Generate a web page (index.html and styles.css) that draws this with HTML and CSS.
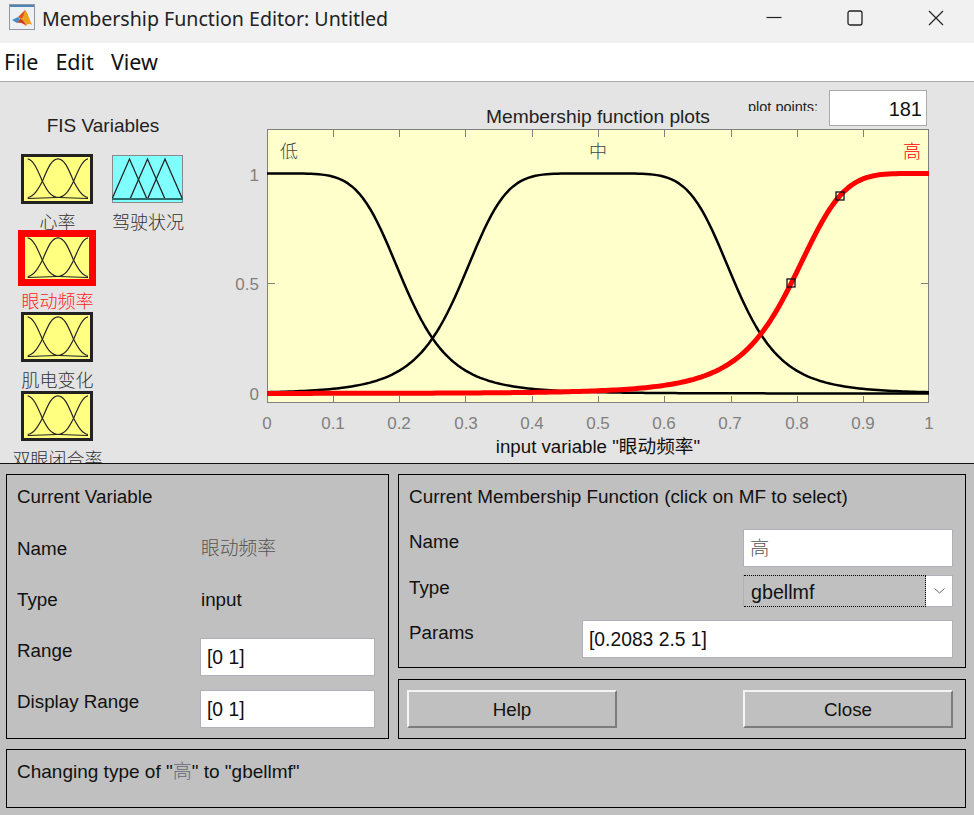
FILE: index.html
```html
<!DOCTYPE html>
<html lang="en">
<head>
<meta charset="utf-8">
<title>Membership Function Editor: Untitled</title>
<link rel="stylesheet" href="styles.css">
</head>
<body>
<svg class="defs" width="0" height="0" aria-hidden="true">
  <symbol id="bells" viewBox="3 3 66 43">
    <g fill="none" stroke="#222" stroke-width="1.2">
      <path d="M6.7 4.3C12 5 16 14 21.4 26.7C26 36 30 43 38 43L67 44"/>
      <path d="M6.7 43C13 42 17 35 21.4 26.7C26 16 30 4.300 37 4.300C44 4.300 48 16 52.600 26.700C57 35 61 42 67 43"/>
      <path d="M67 4.300C62 5 58 14 52.600 26.700C48 36 44 43 36 43L6.700 44"/>
    </g>
  </symbol>
</svg>

<header class="titlebar">
  <svg class="app-icon" width="26" height="26" viewBox="0 0 26 26">
    <rect x="0.5" y="0.5" width="25" height="25" fill="#eef1f4" stroke="#8d98a3"/>
    <rect x="1" y="1" width="24" height="2" fill="#4f86b8"/>
    <path d="M3 16L9 13L11 15L8 19Z" fill="#3f8fc9"/>
    <path d="M9 13L16 6L19 11L12 15Z" fill="#d9541e"/>
    <path d="M16 6C18 8 21 16 23 21C21 20 19 19 17 22C16 18 14 16 12 15C15 13 15 9 16 6Z" fill="#f0a020"/>
    <path d="M8 19L11 15L12 15C14 16 16 18 17 22C15 20 12 18 8 19Z" fill="#c8401a"/>
  </svg>
  <h1 class="app-title">Membership Function Editor: Untitled</h1>
  <div class="win-controls">
    <span class="win-btn"><svg width="16" height="16" viewBox="0 0 16 16"><path d="M0.5 7.500H15.500" stroke="#222" stroke-width="1.2"/></svg></span>
    <span class="win-btn"><svg width="16" height="16" viewBox="0 0 16 16"><rect x="1" y="1" width="14" height="14" rx="2" fill="none" stroke="#222" stroke-width="1.3"/></svg></span>
    <span class="win-btn"><svg width="16" height="16" viewBox="0 0 16 16"><path d="M1 1L15 15M15 1L1 15" stroke="#222" stroke-width="1.2"/></svg></span>
  </div>
</header>

<nav class="menubar">
  <span class="menu-item">File</span>
  <span class="menu-item">Edit</span>
  <span class="menu-item">View</span>
</nav>

<section class="top">
  <aside class="fis">
    <div class="fis-title">FIS Variables</div>
    <div class="fis-grid">
      <div class="var">
        <div class="icon"><svg class="bells"><use href="#bells"/></svg></div>
        <div class="var-label">心率</div>
      </div>
      <div class="var">
        <div class="icon-out">
          <svg width="71" height="48" viewBox="0 0 71 48">
            <g fill="none" stroke="#222" stroke-width="1.3">
              <path d="M0 44L17.5 4L35 44"/>
              <path d="M18 44L35.5 4L53 44"/>
              <path d="M35.500 44L53 4L70.500 44"/>
            </g>
            <path d="M0 44H71" stroke="#2a6a6a" stroke-width="2.200"/>
          </svg>
        </div>
        <div class="var-label">驾驶状况</div>
      </div>
      <div class="var">
        <div class="icon selected"><svg class="bells"><use href="#bells"/></svg></div>
        <div class="var-label red">眼动频率</div>
      </div>
      <div class="var-gap"></div>
      <div class="var">
        <div class="icon"><svg class="bells"><use href="#bells"/></svg></div>
        <div class="var-label">肌电变化</div>
      </div>
      <div class="var-gap"></div>
      <div class="var">
        <div class="icon"><svg class="bells"><use href="#bells"/></svg></div>
        <div class="var-label">双眼闭合率</div>
      </div>
    </div>
  </aside>

  <div class="plot">
    <div class="plot-head">
      <div class="plot-title">Membership function plots</div>
      <div class="points-label"><span>plot points:</span></div>
      <div class="points-input">181</div>
    </div>
    <svg class="chart" width="720" height="334" viewBox="220 129 720 334">
      <rect x="267.500" y="129.500" width="661" height="273" fill="#ffffcc" stroke="#808080"/>
      <path stroke="#808080" fill="none" d="M333.500 403V396M399.500 403V396M465.500 403V396M532.500 403V396M598.500 403V396M664.500 403V396M731.500 403V396M797.500 403V396M863.500 403V396M333.500 130V137M399.500 130V137M465.500 130V137M532.500 130V137M598.500 130V137M664.500 130V137M731.500 130V137M797.500 130V137M863.500 130V137M268 173.500H275M268 283.500H275M268 393.500H275M928 173.500H921M928 283.500H921M928 393.500H921"/>

      <path class="mf black" data-a="0.207" data-b="2.9" data-c="0"/>
      <path class="mf black" data-a="0.207" data-b="2.9" data-c="0.5"/>
      <path class="mf hot" data-a="0.2083" data-b="2.5" data-c="1"/>
      <rect class="handle" x="787" y="279" width="8" height="8"/>
      <rect class="handle" x="836" y="192" width="8" height="8"/>

      <text class="mf-label" x="289" y="158">低</text>
      <text class="mf-label" x="598" y="158">中</text>
      <text class="mf-label hot-label" x="912" y="158">高</text>

      <g class="tick-y">
        <text x="259" y="181">1</text>
        <text x="259" y="290">0.5</text>
        <text x="259" y="400">0</text>
      </g>
      <g class="tick-x">
        <text x="267" y="429">0</text>
        <text x="333" y="429">0.1</text>
        <text x="399" y="429">0.2</text>
        <text x="466" y="429">0.3</text>
        <text x="532" y="429">0.4</text>
        <text x="598" y="429">0.5</text>
        <text x="664" y="429">0.6</text>
        <text x="730" y="429">0.7</text>
        <text x="797" y="429">0.8</text>
        <text x="863" y="429">0.9</text>
        <text x="929" y="429">1</text>
      </g>
      <text class="x-title" x="598" y="453">input variable "眼动频率"</text>
    </svg>
  </div>
</section>

<main class="bottom">
  <section class="panel var-panel">
    <div class="panel-title">Current Variable</div>
    <div class="lbl">Name</div><div class="val cjk-val">眼动频率</div>
    <div class="lbl">Type</div><div class="val">input</div>
    <div class="lbl">Range</div><div class="field">[0 1]</div>
    <div class="lbl">Display Range</div><div class="field">[0 1]</div>
  </section>

  <section class="panel mf-panel">
    <div class="mf-title">Current Membership Function (click on MF to select)</div>
    <div class="mf-row name-row">
      <div class="lbl">Name</div>
      <div class="field short cjk-field">高</div>
    </div>
    <div class="mf-row type-row">
      <div class="lbl">Type</div>
      <div class="combo">
        <div class="combo-value">gbellmf</div>
        <div class="combo-arrow"><svg width="11" height="6" viewBox="0 0 11 6"><path d="M0.5 0.500L5.500 5L10.500 0.500" fill="none" stroke="#666"/></svg></div>
      </div>
    </div>
    <div class="mf-row">
      <div class="lbl">Params</div>
      <div class="field long">[0.2083 2.5 1]</div>
    </div>
  </section>

  <section class="panel btn-panel">
    <button class="btn" type="button">Help</button>
    <button class="btn" type="button">Close</button>
  </section>

  <section class="panel status">Changing type of "<span class="cjk-inline">高</span>" to "gbellmf"</section>
</main>
<script src="chart.js"></script>
</body>
</html>
```
FILE: styles.css
```css
* { box-sizing: border-box; }
html, body { margin: 0; padding: 0; }
body {
  width: 974px;
  height: 815px;
  overflow: hidden;
  background: #c0c0c0;
  color: #111;
  font-family: "Liberation Sans", "Noto Sans CJK SC", sans-serif;
  font-size: 18.8px;
  line-height: 24px;
}
.defs { position: absolute; }

.titlebar {
  height: 43px;
  background: #f1f1f1;
  display: flex;
  align-items: center;
  padding-left: 9px;
}
.app-icon { margin-top: -9px; }
.app-title {
  margin: -5px 0 0 7px;
  font: 400 19.6px/28px "Noto Sans", sans-serif;
  color: #222;
  white-space: nowrap;
}
.win-controls { margin-left: auto; margin-right: -2px; display: flex; }
.win-btn {
  width: 81px;
  height: 36px;
  margin-top: -7px;
  display: flex;
  align-items: center;
  justify-content: center;
}

.menubar {
  height: 39px;
  background: #fff;
  border-bottom: 1px solid #aaa;
  display: flex;
  align-items: center;
  gap: 17px;
  padding-left: 4px;
  font: 400 21.5px/28px "Noto Sans", sans-serif;
  color: #111;
}

.top {
  height: 382px;
  background: #e4e4e4;
  border-bottom: 1px solid #111;
  display: flex;
  overflow: hidden;
}
.fis { width: 220px; flex: none; padding-top: 32px; }
.fis-title { width: 206px; text-align: center; color: #222; font-size: 19px; }
.fis-grid {
  margin-top: 16px;
  margin-left: 11px;
  display: grid;
  grid-template-columns: 91px 90px;
  grid-auto-rows: 79px;
}
.var { display: flex; flex-direction: column; align-items: center; }
.icon {
  width: 72px;
  height: 50px;
  flex: none;
  border: 3px solid #222;
  background: #ffff80;
}
.icon.selected {
  border: 4px solid #f00;
  box-shadow: 0 0 0 3px #f00;
}
.bells { display: block; width: 66px; height: 44px; }
.icon.selected .bells { margin: -1px; }
.icon-out {
  width: 71px;
  height: 48px;
  margin: 1px 0;
  flex: none;
  border: 1px solid #888;
  background: #80ffff;
}
.icon-out svg { display: block; margin: -1px; }
.var-label {
  margin: 7px 0 0 2px;
  white-space: nowrap;
  font-size: 18px;
  font-weight: 300;
  color: #333;
}
.var-label.red { color: #f22; }

.plot { flex: 1; }
.plot-head {
  height: 47px;
  display: flex;
  padding: 8px 47px 0 266px;
}
.plot-title {
  width: 262px;
  padding-top: 15px;
  white-space: nowrap;
  color: #222;
  font-size: 19.2px;
}
.points-label {
  height: 21px;
  overflow: hidden;
  width: 81px;
  font-size: 14.5px;
  line-height: 17px;
  padding-top: 9px;
  color: #222;
  white-space: nowrap;
}
.points-label span { display: block; height: 12px; overflow: hidden; }
.points-input {
  width: 98px;
  height: 36px;
  background: #fff;
  border: 1px solid #aaa;
  text-align: right;
  padding-right: 4px;
  font-size: 20px;
  line-height: 36px;
  color: #111;
}
.chart { display: block; }
.mf { fill: none; stroke-linejoin: round; }
.mf.black { stroke: #000; stroke-width: 2.5; }
.mf.hot { stroke: #f00; stroke-width: 5; }
.handle { fill: none; stroke: #111; stroke-width: 1.300; }
.mf-label { font-size: 18px; font-weight: 300; text-anchor: middle; fill: #444; }
.mf-label.hot-label { fill: #f00; }
.tick-y text { font-size: 17px; fill: #808080; text-anchor: end; }
.tick-x text { font-size: 17px; fill: #808080; text-anchor: middle; }
.x-title { font-size: 18.7px; text-anchor: middle; fill: #111; }

.bottom {
  display: grid;
  grid-template-columns: 383px 568px;
  grid-template-rows: 194px 60px 59px;
  column-gap: 9px;
  padding: 10px 0 0 6px;
}
.panel { border: 1px solid #000; }
.var-panel {
  grid-row: 1 / span 2;
  height: 265px;
  display: grid;
  grid-template-columns: 183px 175px;
  grid-template-rows: 48px 51px 51px 51px 52px;
  align-items: center;
  padding-left: 10px;
}
.panel-title { grid-column: 1 / -1; align-self: start; padding-top: 10px; }
.var-panel .field { align-self: end; }
.val { padding-left: 1px; }
.cjk-val { color: #555; font-weight: 300; }
.field {
  height: 38px;
  background: #fff;
  border: 1px solid #b0b0b8;
  padding-left: 6px;
  line-height: 37px;
  font-size: 19.3px;
}
.mf-panel { padding: 10px 12px 0 10px; }
.mf-title { margin-bottom: 20px; white-space: nowrap; font-size: 18.9px; }
.mf-row { display: flex; justify-content: space-between; align-items: flex-start; }
.mf-row .lbl { padding-top: 1px; }
.name-row { margin-bottom: 8px; }
.type-row { margin-bottom: 13px; }
.field.short { width: 210px; }
.field.long { width: 371px; }
.cjk-field { color: #555; font-weight: 300; }
.combo {
  width: 210px;
  height: 32px;
  border: 1px solid #b0b0b8;
  background: #fff;
  display: flex;
}
.combo-value {
  width: 182px;
  margin: -1px 0 -1px 0;
  border: 1px dotted #000;
  border-left: 0;
  background: #c0c0c0;
  padding-left: 7px;
  line-height: 32px;
  font-size: 19.7px;
}
.combo-arrow { flex: 1; display: flex; align-items: center; justify-content: center; }
.btn-panel {
  grid-column: 2;
  grid-row: 2;
  height: 60px;
  margin-top: 11px;
  align-self: start;
  display: flex;
  justify-content: space-between;
  padding: 10px 12px 0 8px;
}
.btn {
  width: 210px;
  height: 38px;
  padding: 1px 0 0;
  background: #c0c0c0;
  border: 2px solid;
  border-color: #f4f4f4 #7c7c7c #7c7c7c #f4f4f4;
  font: inherit;
  color: #111;
}
.status {
  grid-column: 1 / -1;
  grid-row: 3;
  width: 960px;
  height: 59px;
  margin-top: 21px;
  padding: 10px 10px 0;
  font-size: 19px;
}
.cjk-inline { color: #667; font-weight: 300; }
```
FILE: chart.js
```js
// Draws the generalized bell membership functions from their parameters.
var X0 = 267, X1 = 929, Y1 = 173.5, Y0 = 393.5;
document.querySelectorAll('.mf').forEach(function (el) {
  var a = +el.dataset.a, b = +el.dataset.b, c = +el.dataset.c, d = '';
  for (var i = 0; i <= 180; i++) {
    var x = i / 180;
    var y = 1 / (1 + Math.pow(Math.abs((x - c) / a), 2 * b));
    d += (i ? 'L' : 'M') + (X0 + x * (X1 - X0)).toFixed(2) + ' ' + (Y0 - y * (Y0 - Y1)).toFixed(2);
  }
  el.setAttribute('d', d);
});
```
